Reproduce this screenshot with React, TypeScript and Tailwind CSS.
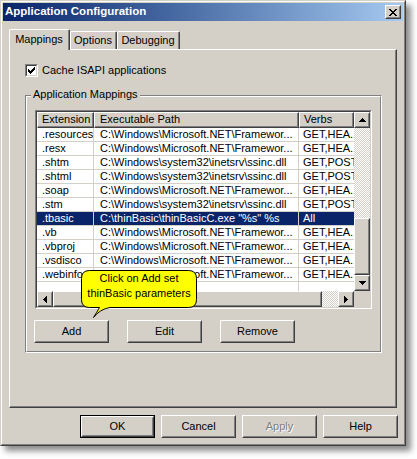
import React from "react";

function Pix({ rows, color = "#000" }: { rows: string[]; color?: string }) {
  const w = rows[0].length;
  const h = rows.length;
  return (
    <svg width={w} height={h} shapeRendering="crispEdges" className="block">
      {rows.flatMap((r, y) =>
        r.split("").map((c, x) =>
          c === "x" ? <rect key={`${x}-${y}`} x={x} y={y} width={1} height={1} fill={color} /> : null
        )
      )}
    </svg>
  );
}

const UP = ["...x...", "..xxx..", ".xxxxx.", "xxxxxxx"];
const DOWN = ["xxxxxxx", ".xxxxx.", "..xxx..", "...x..."];
const LEFT = ["...x", "..xx", ".xxx", "xxxx", ".xxx", "..xx", "...x"];
const RIGHT = ["x...", "xx..", "xxx.", "xxxx", "xxx.", "xx..", "x..."];
const CLOSE = ["xx....xx", ".xx..xx.", "..xxxx..", "...xx...", "..xxxx..", ".xx..xx.", "xx....xx"];
const CHECK = ["......x", ".....xx", "x...xxx", "xx.xxx.", "xxxxx..", ".xxx...", "..x...."];

function Raised({ className, children }: { className: string; children?: React.ReactNode }) {
  return (
    <div className={`border border-t-white border-l-white border-r-[#404040] border-b-[#404040] bg-[#d4d0c8] ${className}`}>
      <div className="h-full w-full border border-t-[#d4d0c8] border-l-[#d4d0c8] border-r-[#808080] border-b-[#808080] flex items-center justify-center">
        {children}
      </div>
    </div>
  );
}

function Button({ label, isDefault, disabled }: { label: string; isDefault?: boolean; disabled?: boolean }) {
  const text = disabled ? (
    <span className="text-[#808080] [text-shadow:1px_1px_0_#ffffff]">{label}</span>
  ) : (
    <span className="text-black">{label}</span>
  );
  if (isDefault) {
    return (
      <div className="w-[75px] h-[23px] border border-black">
        <Raised className="w-full h-full">{text}</Raised>
      </div>
    );
  }
  return <Raised className="w-[75px] h-[23px]">{text}</Raised>;
}

const M = "C:\\Windows\\Microsoft.NET\\Framewor...";
const S = "C:\\Windows\\system32\\inetsrv\\ssinc.dll";

const ROWS: [string, string, string, boolean?][] = [
  [".resources", M, "GET,HEA..."],
  [".resx", M, "GET,HEA..."],
  [".shtm", S, "GET,POST"],
  [".shtml", S, "GET,POST"],
  [".soap", M, "GET,HEA..."],
  [".stm", S, "GET,POST"],
  [".tbasic", 'C:\\thinBasic\\thinBasicC.exe "%s" %s', "All", true],
  [".vb", M, "GET,HEA..."],
  [".vbproj", M, "GET,HEA..."],
  [".vsdisco", M, "GET,HEA..."],
  [".webinfo", M, "GET,HEA..."],
];

function HeaderCell({ w, pl, label }: { w: string; pl: string; label: string }) {
  return (
    <div className={`${w} h-[16px] shrink-0 border border-t-white border-l-white border-r-[#404040] border-b-[#404040]`}>
      <div className={`h-full border-r border-b border-r-[#808080] border-b-[#808080] ${pl} flex items-center whitespace-nowrap overflow-hidden`}>
        {label}
      </div>
    </div>
  );
}

function ListView() {
  return (
    <div className="w-[337px] h-[199px] border border-t-[#808080] border-l-[#808080] border-r-white border-b-white">
      <div className="h-full border border-t-[#404040] border-l-[#404040] border-r-[#d4d0c8] border-b-[#d4d0c8] flex flex-col">
        <div className="h-[179px] flex">
          <div className="w-[317px] h-full bg-white overflow-hidden text-[11px]">
            <div className="flex bg-[#d4d0c8]">
              <HeaderCell w="w-[57px]" pl="pl-[4px]" label="Extension" />
              <HeaderCell w="w-[205px]" pl="pl-[5px]" label="Executable Path" />
              <HeaderCell w="w-[55px]" pl="pl-[4px]" label="Verbs" />
            </div>
            {ROWS.map(([ext, path, verbs, sel]) => (
              <div
                key={ext}
                className={`flex h-[14px] border-b border-[#d4d0c8] leading-[13px] ${sel ? "bg-[#0a246a] text-white" : "text-black"}`}
              >
                <div className="w-[57px] shrink-0 border-r border-[#d4d0c8] pl-[5px] whitespace-nowrap overflow-hidden">{ext}</div>
                <div className="w-[205px] shrink-0 border-r border-[#d4d0c8] pl-[6px] whitespace-nowrap overflow-hidden">{path}</div>
                <div className="w-[55px] shrink-0 pl-[4px] whitespace-nowrap overflow-hidden">{verbs}</div>
              </div>
            ))}
            <div className="flex h-[14px]">
              <div className="w-[57px] shrink-0 border-r border-[#d4d0c8]" />
              <div className="w-[205px] shrink-0 border-r border-[#d4d0c8]" />
            </div>
          </div>
          <div className="w-[16px] h-full flex flex-col">
            <Raised className="w-[16px] h-[16px] shrink-0">
              <Pix rows={UP} />
            </Raised>
            <div className="h-[90px] bg-[repeating-conic-gradient(#d4d0c8_0%_25%,#ffffff_0%_50%)] bg-[length:2px_2px]" />
            <Raised className="w-[16px] h-[57px] shrink-0" />
            <Raised className="w-[16px] h-[16px] shrink-0">
              <Pix rows={DOWN} />
            </Raised>
          </div>
        </div>
        <div className="h-[16px] flex">
          <Raised className="w-[16px] h-[16px] shrink-0">
            <Pix rows={LEFT} />
          </Raised>
          <Raised className="w-[269px] h-[16px] shrink-0" />
          <div className="w-[16px] h-[16px] bg-[repeating-conic-gradient(#d4d0c8_0%_25%,#ffffff_0%_50%)] bg-[length:2px_2px]" />
          <Raised className="w-[16px] h-[16px] shrink-0">
            <Pix rows={RIGHT} />
          </Raised>
          <div className="w-[16px] h-[16px] bg-[#d4d0c8]" />
        </div>
      </div>
    </div>
  );
}

function Tab({ label, w, selected }: { label: string; w: string; selected?: boolean }) {
  if (selected) {
    return (
      <div className={`${w} h-[21px] mb-[-1px] relative z-10 bg-[#d4d0c8] border-l border-t border-r border-l-white border-t-white border-r-[#404040] rounded-tl-[2px] rounded-tr-[2px]`}>
        <div className="h-full border-r border-r-[#808080] flex items-center justify-center pb-[1px]">{label}</div>
      </div>
    );
  }
  return (
    <div className={`${w} h-[18px] bg-[#d4d0c8] border-l border-t border-r border-l-white border-t-white border-r-[#404040] rounded-tl-[2px] rounded-tr-[2px]`}>
      <div className="h-full border-r border-r-[#808080] flex items-center justify-center">{label}</div>
    </div>
  );
}

export default function App() {
  return (
    <div className="w-[417px] h-[459px] bg-white font-['Liberation_Sans',Arial,sans-serif] text-[11px] text-black">
      <div className="relative w-[406px] h-[446px] bg-[#d4d0c8] border border-t-[#d4d0c8] border-l-[#d4d0c8] border-r-[#404040] border-b-[#404040] shadow-[5px_5px_6px_rgba(0,0,0,0.45)]">
        <div className="h-full border border-t-white border-l-white border-r-[#808080] border-b-[#808080] p-px flex flex-col">
          {/* Title bar */}
          <div className="h-[18px] shrink-0 flex items-center justify-between bg-linear-to-r from-[#0a246a] to-[#a6caf0] pl-[2px] pr-[2px]">
            <span className="text-white font-bold text-[11.5px] leading-none">Application Configuration</span>
            <Raised className="w-[16px] h-[14px]">
              <Pix rows={CLOSE} />
            </Raised>
          </div>

          {/* Tabs */}
          <div className="mt-[8px] h-[20px] shrink-0 flex items-end pl-[6px]">
            <Tab label="Mappings" w="w-[61px]" selected />
            <Tab label="Options" w="w-[47px]" />
            <Tab label="Debugging" w="w-[63px]" />
          </div>

          {/* Panel */}
          <div className="mx-[6px] h-[359px] shrink-0 border border-t-white border-l-white border-r-[#404040] border-b-[#404040]">
            <div className="h-full border-r border-b border-r-[#808080] border-b-[#808080] flex flex-col">
              <div className="pl-[15px] pt-[14px] flex items-center gap-[4px]">
                <div className="w-[13px] h-[13px] border border-t-[#808080] border-l-[#808080] border-r-white border-b-white">
                  <div className="h-full border border-t-[#404040] border-l-[#404040] border-r-[#d4d0c8] border-b-[#d4d0c8] bg-white flex items-center justify-center">
                    <Pix rows={CHECK} />
                  </div>
                </div>
                <span className="leading-[13px]">Cache ISAPI applications</span>
              </div>

              {/* Group box */}
              <div className="relative mt-[18px] ml-[15px] w-[357px] h-[258px] border border-t-[#808080] border-l-[#808080] border-r-white border-b-white">
                <div className="h-full border border-t-white border-l-white border-r-[#808080] border-b-[#808080] pl-[8px] pt-[13px] flex flex-col">
                  <ListView />
                  <div className="mt-[11px] -ml-px flex gap-[18px]">
                    <Button label="Add" />
                    <Button label="Edit" />
                    <Button label="Remove" />
                  </div>
                </div>
                <span className="absolute left-[5px] -top-[8px] px-[2px] bg-[#d4d0c8] leading-[13px]">Application Mappings</span>
              </div>
            </div>
          </div>

          {/* Bottom buttons */}
          <div className="mt-[7px] flex justify-end gap-[6px] pr-[5px]">
            <Button label="OK" isDefault />
            <Button label="Cancel" />
            <Button label="Apply" disabled />
            <Button label="Help" />
          </div>
        </div>

        {/* Balloon tooltip */}
        <svg className="absolute left-[79px] top-[268px]" width={120} height={50}>
          <path
            d="M 9.5 1.5 H 108.5 Q 116.5 1.5 116.5 9.5 V 30.5 Q 116.5 38.5 108.5 38.5 H 30 Q 20 40 13.5 48.5 Q 17 43 19.5 38.5 H 9.5 Q 1.5 38.5 1.5 30.5 V 9.5 Q 1.5 1.5 9.5 1.5 Z"
            fill="#ffff00"
            stroke="#000"
            strokeWidth={1}
          />
        </svg>
        <div className="absolute left-[80px] top-[270px] w-[116px] text-center leading-[14.5px] text-black">
          <div>Click on Add set</div>
          <div>thinBasic parameters</div>
        </div>
      </div>
    </div>
  );
}
